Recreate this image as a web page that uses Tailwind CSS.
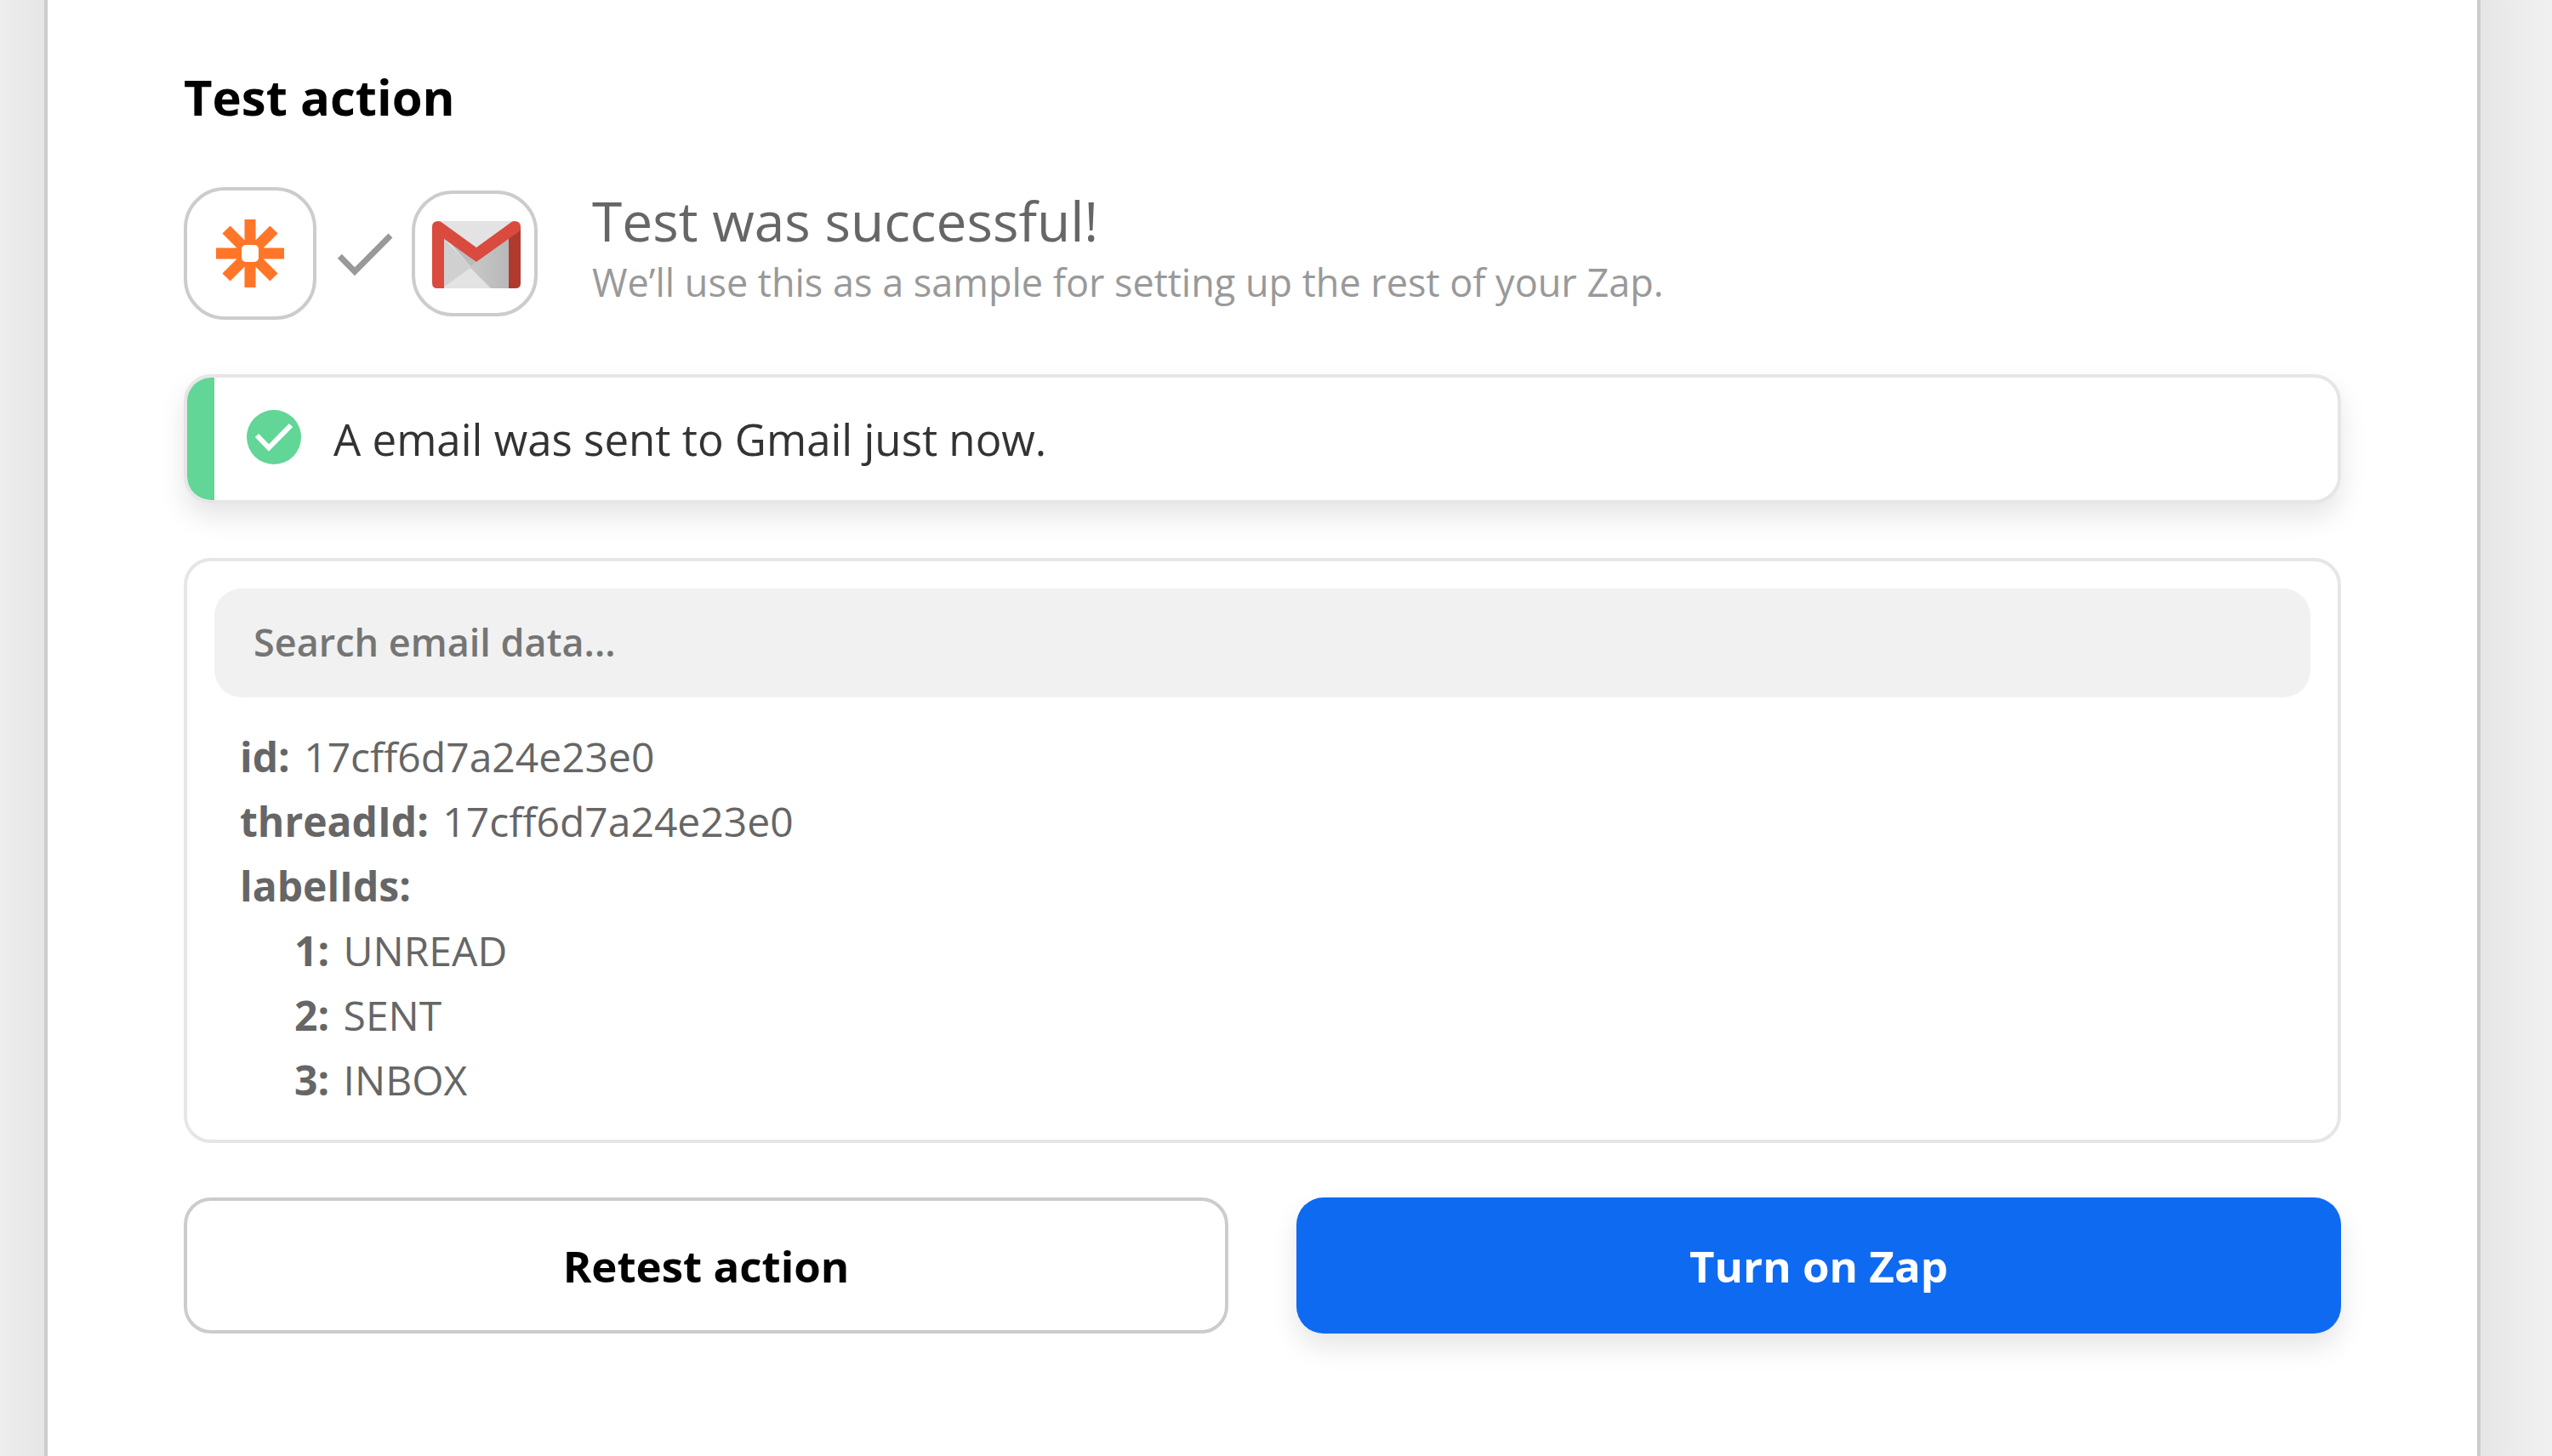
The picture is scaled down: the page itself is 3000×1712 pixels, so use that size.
<!DOCTYPE html>
<html lang="en">
<head>
    <meta charset="UTF-8">
    <meta name="viewport" content="width=device-width, initial-scale=1.0">
    <title>Test action</title>
    <script src="https://cdn.jsdelivr.net/npm/@tailwindcss/browser@4"></script>
</head>
<body class="bg-[#f2f2f2] font-['Open_Sans',sans-serif]">

<div class="flow-root min-h-screen overflow-hidden">
<!-- The panel runs past the top and bottom so its side shadow stays even -->
<main class="-my-32 ml-[52px] mr-[84px] bg-white border-x-4 border-[#ccc] px-40 pt-[200px] pb-[272px] shadow-[0_0_120px_rgba(0,0,0,0.1)]">
    <h1 class="text-[58px] leading-[84px] font-bold text-black">Test action</h1>

    <!-- Status header -->
    <div class="mt-16 flex items-center">
        <div class="size-[156px] shrink-0 rounded-[48px] border-4 border-[#ccc] flex items-center justify-center">
            <svg class="size-20" viewBox="0 0 80 80" fill="none" role="img" aria-label="Zapier">
                <path d="M40 0V80M0 40H80M12 12L68 68M68 12L12 68" stroke="#ff7628" stroke-width="13"/>
                <rect x="30" y="30" width="20" height="20" rx="5" fill="#fff"/>
            </svg>
        </div>
        <svg class="size-28 shrink-0" viewBox="0 0 112 112" fill="none" aria-hidden="true">
            <path d="M27.3 59.3L45 77.3L87 35" stroke="#999" stroke-width="7"/>
        </svg>
        <div class="size-[148px] shrink-0 rounded-[48px] border-4 border-[#ccc] flex items-center justify-center">
            <svg class="size-28" viewBox="-6 -18 112 112" role="img" aria-label="Gmail">
                <defs>
                    <linearGradient id="fold" x1="0" x2="1" y1="0" y2="0">
                        <stop offset="0" stop-color="#c8c8c8"/>
                        <stop offset="1" stop-color="#b8b8b8"/>
                    </linearGradient>
                </defs>
                <path d="M8 0H96V79H8Z" fill="#e3e3e3"/>
                <path d="M13 20L46 54L13 78Z" fill="#d0d0d0"/>
                <path d="M18 22L52 48L46 54Z" fill="#bcbcbc"/>
                <path d="M52 48L91 20V79H69L44 54Z" fill="url(#fold)"/>
                <path d="M0 7H14V79H6Q0 79 0 73Z" fill="#d94b3f"/>
                <path d="M104 7H90V79H98Q104 79 104 73Z" fill="#b03a2e"/>
                <path d="M0 7Q0 0 7 0Q10 0 12 2L52 31L92 2Q94 0 97 0Q104 0 104 7Q104 11 101 13L52 48L3 13Q0 11 0 7Z" fill="#d94b3f"/>
            </svg>
        </div>
        <div class="ml-16 pb-3">
            <h2 class="text-[64px] leading-[80px] text-[#666]">Test was successful!</h2>
            <p class="text-[45px] leading-[64px] text-[#999]">We’ll use this as a sample for setting up the rest of your Zap.</p>
        </div>
    </div>

    <!-- Success notice -->
    <div class="mt-16 flex items-stretch overflow-hidden rounded-[32px] border-4 border-[#e6e6e6] bg-white shadow-[0_16px_32px_rgba(0,0,0,0.1)]" role="status">
        <div class="w-8 bg-[#61d697]"></div>
        <div class="flex h-36 items-center gap-[38px] pl-[38px]">
            <svg class="mb-1 size-16" viewBox="0 0 64 64" fill="none" aria-hidden="true">
                <circle cx="32" cy="32" r="32" fill="#61d697"/>
                <path d="M12 30L26 44.5L52 18" stroke="#fff" stroke-width="6"/>
            </svg>
            <p class="text-[51px] leading-[72px] text-[#333]">A email was sent to Gmail just now.</p>
        </div>
    </div>

    <!-- Returned data -->
    <section class="mt-16 rounded-[32px] border-4 border-[#e6e6e6] p-8 text-[48px] leading-[76px] text-[#666]">
        <input
            type="search"
            aria-label="Search email data"
            placeholder="Search email data..."
            class="block h-32 w-full rounded-[32px] bg-[#f1f1f1] px-[46px] pb-1 text-[45px] font-semibold placeholder:text-[#757575]">
        <ul class="mt-8 px-[30px]">
            <li><b class="mr-1">id:</b> 17cff6d7a24e23e0</li>
            <li><b class="mr-1">threadId:</b> 17cff6d7a24e23e0</li>
            <li>
                <b>labelIds:</b>
                <ul class="pl-16">
                    <li><b class="mr-1">1:</b> UNREAD</li>
                    <li><b class="mr-1">2:</b> SENT</li>
                    <li><b class="mr-1">3:</b> INBOX</li>
                </ul>
            </li>
        </ul>
    </section>

    <!-- Actions -->
    <div class="mt-16 grid grid-cols-2 gap-20 text-[51px] leading-[72px]">
        <button type="button" class="h-40 rounded-[32px] border-4 border-[#ccc] font-bold text-black">Retest action</button>
        <button type="button" class="h-40 rounded-[32px] bg-[#0f6af2] font-bold text-white shadow-[0_16px_32px_rgba(0,0,0,0.1)]">Turn on Zap</button>
    </div>
</main>
</div>

</body>
</html>
